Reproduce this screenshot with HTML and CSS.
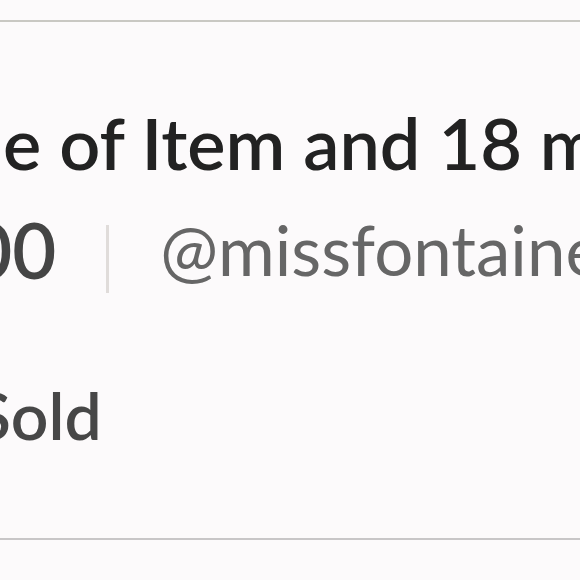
FILE: index.html
```html
<!DOCTYPE html>
<html>
<head>
<meta charset="utf-8">
<link rel="stylesheet" href="styles.css">
</head>
<body>
<div class="card">
  <div class="title">e of Item and 18 months</div>
  <div class="meta">
    <span class="price">$100</span>
    <span class="sep"></span>
    <span class="user">@missfontaine</span>
  </div>
  <div class="status">Sold</div>
</div>
</body>
</html>
```
FILE: styles.css
```css
html, body {
  margin: 0;
  padding: 0;
  background: #fcfafb;
}
body {
  width: 580px;
  height: 580px;
  overflow: hidden;
  font-family: Lato, "Noto Sans", sans-serif;
}
.card {
  margin-top: 20px;
  border-top: 2px solid #c9c8c3;
  border-bottom: 2px solid #c8c6c7;
  height: 516px;
  box-sizing: content-box;
  overflow: hidden;
  white-space: nowrap;
}
.title {
  margin-top: 84px;
  padding-left: 3px;
  font-size: 72px;
  line-height: 72px;
  font-weight: 600;
  color: #222222;
}
.meta {
  display: flex;
  align-items: center;
  margin-top: 36px;
  height: 72px;
}
.price {
  flex: none;
  margin-left: -120px;
  font-size: 76px;
  line-height: 72px;
  font-weight: 600;
  color: #454545;
}
.sep {
  flex: none;
  display: block;
  width: 3px;
  height: 68px;
  background: #e0dcda;
  margin-left: 50px;
  margin-top: 18px;
}
.user {
  flex: none;
  margin-left: 51px;
  font-size: 69px;
  line-height: 72px;
  font-weight: 400;
  color: #666666;
}
.status {
  margin-top: 96px;
  margin-left: -25px;
  font-size: 66px;
  line-height: 66px;
  font-weight: 600;
  color: #474747;
}
```
